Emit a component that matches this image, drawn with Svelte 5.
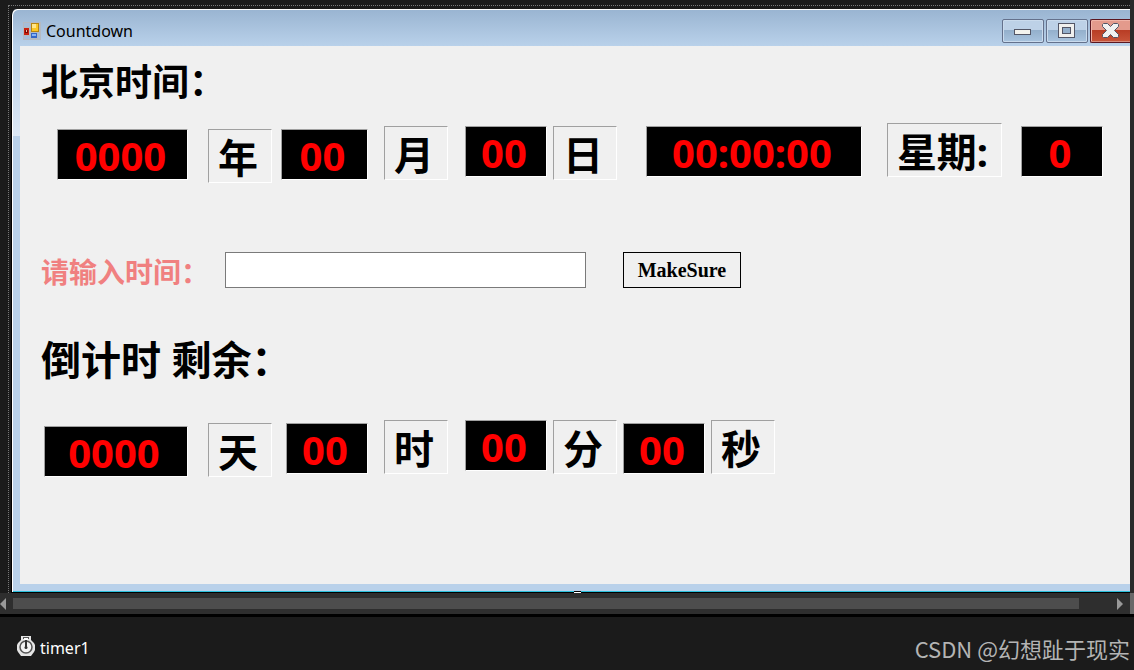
<script lang="ts">
	type Cell = { text: string; kind: 'digits' | 'unit'; size: string; drop: string };

	const cell = (text: string, kind: 'digits' | 'unit', size: string, drop: string): Cell => ({
		text,
		kind,
		size,
		drop
	});

	const clock = [
		cell('0000', 'digits', 'year', 'low'),
		cell('年', 'unit', 'single', 'low'),
		cell('00', 'digits', 'month', 'low'),
		cell('月', 'unit', 'single', 'mid'),
		cell('00', 'digits', 'pair', 'mid'),
		cell('日', 'unit', 'single', 'mid'),
		cell('00:00:00', 'digits', 'time', 'mid'),
		cell('星期:', 'unit', 'week', 'top'),
		cell('0', 'digits', 'pair', 'mid')
	];

	const remaining = [
		cell('0000', 'digits', 'days', 'low'),
		cell('天', 'unit', 'single', 'mid'),
		cell('00', 'digits', 'pair', 'mid'),
		cell('时', 'unit', 'single', 'top'),
		cell('00', 'digits', 'pair', 'top'),
		cell('分', 'unit', 'single', 'top'),
		cell('00', 'digits', 'pair', 'mid'),
		cell('秒', 'unit', 'single', 'top')
	];

	let target = $state('');
</script>

<div class="designer">
	<div class="surface">
		<div class="selection">
			<main class="window">
				<header class="titlebar">
					<svg class="app-icon" width="18" height="18" viewBox="0 0 18 18">
						<rect width="18" height="18" fill="#b4bac2" />
						<path d="M1 1h6v4H1zM1 14h6v3H1zM15 11h2v6h-2z" fill="#a6bdd8" />
						<rect x="1" y="6" width="5" height="7" fill="#c8200e" />
						<rect x="2" y="8" width="3" height="3" fill="#7c0b05" />
						<rect x="3" y="8" width="1" height="2" fill="#f5b4a4" />
						<rect x="8" y="1" width="8" height="9" fill="#b8860f" />
						<rect x="9" y="2" width="6" height="7" fill="#fcc725" />
						<rect x="9" y="2" width="4" height="4" fill="#ffe68a" />
						<rect x="8" y="11" width="6" height="5" fill="#3467c8" />
						<rect x="9" y="12" width="4" height="2" fill="#86b4f8" />
					</svg>
					<h1>Countdown</h1>
					<div class="controls">
						<button class="control" aria-label="Minimize">
							<svg width="18" height="7" viewBox="0 0 18 7">
								<rect x="0.5" y="1.5" width="16" height="5" fill="#f3f3ee" stroke="#535666" />
							</svg>
						</button>
						<button class="control" aria-label="Maximize">
							<svg width="18" height="16" viewBox="0 0 18 16">
								<rect x="0.5" y="0.5" width="16" height="14" fill="#f0f0ee" stroke="#535666" />
								<rect x="4.5" y="4.5" width="8" height="6" fill="#93afcb" stroke="#535666" />
							</svg>
						</button>
						<button class="control close" aria-label="Close">
							<svg width="18" height="16" viewBox="0 0 18 16">
								<path
									d="M1.5 .5H5.500L8.500 3.500l3-3h4l1 1v2L12.500 7.500l4 4v2l-1 1h-4l-3-3-3 3h-4l-1-1v-2l4-4-4-4v-2z"
									fill="#f1f1f1"
									stroke="#535666"
									stroke-linejoin="round"
								/>
							</svg>
						</button>
					</div>
				</header>

				<div class="form">
					<h2 class="clock-title">北京时间：</h2>
					<div class="readout">
						{#each clock as c}
							<span class="{c.kind} {c.size} {c.drop}">{c.text}</span>
						{/each}
					</div>

					<div class="entry">
						<label for="target">请输入时间：</label>
						<input id="target" type="text" bind:value={target} />
						<button class="confirm">MakeSure</button>
					</div>

					<h2 class="left-title">倒计时 剩余：</h2>
					<div class="readout left">
						{#each remaining as c}
							<span class="{c.kind} {c.size} {c.drop}">{c.text}</span>
						{/each}
					</div>
				</div>
				<div class="handle"></div>
			</main>
		</div>
	</div>

	<div class="scrollbar">
		<svg width="7" height="12" viewBox="0 0 7 12"><path d="M6 0v12L0 6z" fill="#999" /></svg>
		<div class="track"><div class="thumb"></div></div>
		<svg width="7" height="12" viewBox="0 0 7 12"><path d="M0 0v12l6-6z" fill="#999" /></svg>
		<div class="corner"></div>
	</div>

	<footer class="tray">
		<svg class="stopwatch" width="18" height="20" viewBox="0 0 18 20">
			<path d="M4 0h10v4l3 3 1 2v5l-1 2-3 4H4l-3-4-1-2V9l1-2 3-3z" fill="#e4e4e4" />
			<path d="M6 1h6v2H6z" fill="#555" />
			<path d="M7 2h4v2H7z" fill="#fff" />
			<circle cx="9" cy="11" r="6" fill="#f4f4f4" stroke="#555" stroke-width="1.5" />
			<path d="M8 4h2v8H8z" fill="#333" />
			<circle cx="9" cy="11.5" r="1.5" fill="#333" />
		</svg>
		<span class="component-name">timer1</span>
		<span class="watermark">CSDN @幻想趾于现实</span>
	</footer>
</div>

<style>
	:global(body) {
		margin: 0;
		background: #1b1b1b;
	}

	.designer {
		min-height: 100vh;
		display: flex;
		flex-direction: column;
		font-family: 'Noto Sans', 'Noto Sans CJK SC', sans-serif;
		background: #1b1b1b;
		overflow: hidden;
	}

	h1,
	h2 {
		margin: 0;
	}

	.surface {
		padding: 5px 0 0 8px;
		border-right: 4px solid #2a2a2a;
	}

	.selection {
		padding: 3px 0 0 2px;
		border-top: 1px dotted #777;
		border-left: 1px dotted #777;
	}

	.window {
		position: relative;
		border: solid #000;
		border-width: 0 0 1px 1px;
		border-top-left-radius: 6px;
		background: #b9d1ea;
		box-shadow:
			inset 1px 1px #fff,
			inset 0 -1px #2bc0dc;
		padding: 0 0 8px 8px;
		background-image: linear-gradient(#99b4d1, #b9d1ea 37px, #dce8f5 127px, #b9d1ea 127px);
	}

	.titlebar {
		display: flex;
		align-items: center;
		height: 37px;
		padding-left: 3px;
		gap: 5px;
	}

	.app-icon {
		margin-top: 6px;
	}

	h1 {
		flex: 1;
		padding-top: 6px;
		font-size: 16px;
		font-weight: 400;
		line-height: 24px;
		color: #000;
	}

	.controls {
		display: flex;
		gap: 2px;
		padding-top: 7px;
	}

	.control {
		display: flex;
		align-items: center;
		justify-content: center;
		width: 42px;
		height: 24px;
		padding: 0;
		border: 1px solid #64718c;
		border-radius: 2px;
		box-shadow: inset 0 0 0 1px #cadbed;
		background: linear-gradient(#bdd1e7 0 45%, #93afcb 45%, #a9c4df);
	}

	.control.close {
		width: 40px;
		border-color: #5a1620;
		border-right: 0;
		border-radius: 2px 0 0 2px;
		box-shadow: inset 1px 1px #f0b4a8, inset 0 -1px #d88c7c;
		background: linear-gradient(#e39a8c 0 45%, #b83c24 45%, #c8553a);
	}

	.form {
		height: 538px;
		box-sizing: border-box;
		padding: 12px 20px 0 21px;
		background: #f0f0f0;
		overflow: hidden;
	}

	h2 {
		font-weight: 700;
		color: #000;
	}

	.clock-title {
		font-size: 37px;
		line-height: 48px;
	}

	.left-title {
		margin-top: 44px;
		font-size: 40px;
		line-height: 56px;
	}

	.readout {
		display: grid;
		grid-template-columns: 147px 78px 90px 74px 93px 64px auto auto auto;
		column-gap: 6px;
		justify-content: start;
		justify-items: end;
		align-items: start;
		margin-top: 17px;
		min-height: 60px;
	}

	.readout.left {
		margin-top: 32px;
	}

	.digits,
	.unit {
		box-sizing: border-box;
		padding-right: 4px;
		border: 1px solid;
		border-color: #a0a0a0 #fff #fff #a0a0a0;
		font-size: 40px;
		font-weight: 700;
		text-align: center;
		white-space: nowrap;
	}

	.digits {
		height: 51px;
		line-height: 52px;
		color: #f00;
		background: #000;
	}

	.unit {
		height: 54px;
		line-height: 56px;
		color: #000;
	}

	.year {
		width: 131px;
	}

	.days {
		width: 144px;
	}

	.month {
		width: 87px;
	}

	.pair {
		width: 82px;
	}

	.single {
		width: 64px;
	}

	.time {
		width: 216px;
		margin-left: 23px;
	}

	.week {
		width: 115px;
		margin-left: 19px;
	}

	.week + .pair {
		margin-left: 13px;
	}

	.mid {
		margin-top: 3px;
	}

	.low {
		margin-top: 6px;
	}

	.entry {
		display: flex;
		align-items: center;
		margin-top: 69px;
	}

	.entry label {
		width: 184px;
		padding-top: 4px;
		font-size: 28px;
		font-weight: 700;
		line-height: 32px;
		white-space: nowrap;
		color: #f08080;
	}

	.entry input {
		box-sizing: border-box;
		width: 361px;
		height: 36px;
		padding: 0 6px;
		border: 1px solid #7a7a7a;
		background: #fff;
		font-size: 20px;
	}

	.confirm {
		width: 118px;
		height: 36px;
		margin-left: 37px;
		padding: 0;
		border: 1px solid #000;
		background: #f0f0f0;
		font: 700 20px 'Liberation Serif', serif;
		color: #000;
	}

	/* bottom grip of the selected form */
	.handle {
		position: absolute;
		bottom: -1px;
		left: calc(50% + 3px);
		width: 7px;
		height: 1px;
		background: #fff;
		border-top: 1px solid #000;
	}

	.scrollbar {
		display: flex;
		align-items: center;
		height: 21px;
		gap: 6px;
		background: #2e2e2e;
		border-bottom: 3px solid #000;
	}

	.track {
		flex: 1;
		padding-right: 32px;
	}

	.thumb {
		height: 11px;
		background: #4d4d4d;
	}

	.corner {
		width: 4px;
		height: 21px;
		background: #686868;
	}

	.tray {
		display: flex;
		align-items: center;
		gap: 5px;
		padding: 15px 4px 0 17px;
		color: #fff;
	}

	.stopwatch {
		margin-bottom: 4px;
	}

	.component-name {
		flex: 1;
		font-size: 16px;
		line-height: 32px;
	}

	.watermark {
		font-family: 'Noto Sans CJK SC', sans-serif;
		font-size: 22px;
		line-height: 32px;
		color: #b4b4b4;
	}
</style>
